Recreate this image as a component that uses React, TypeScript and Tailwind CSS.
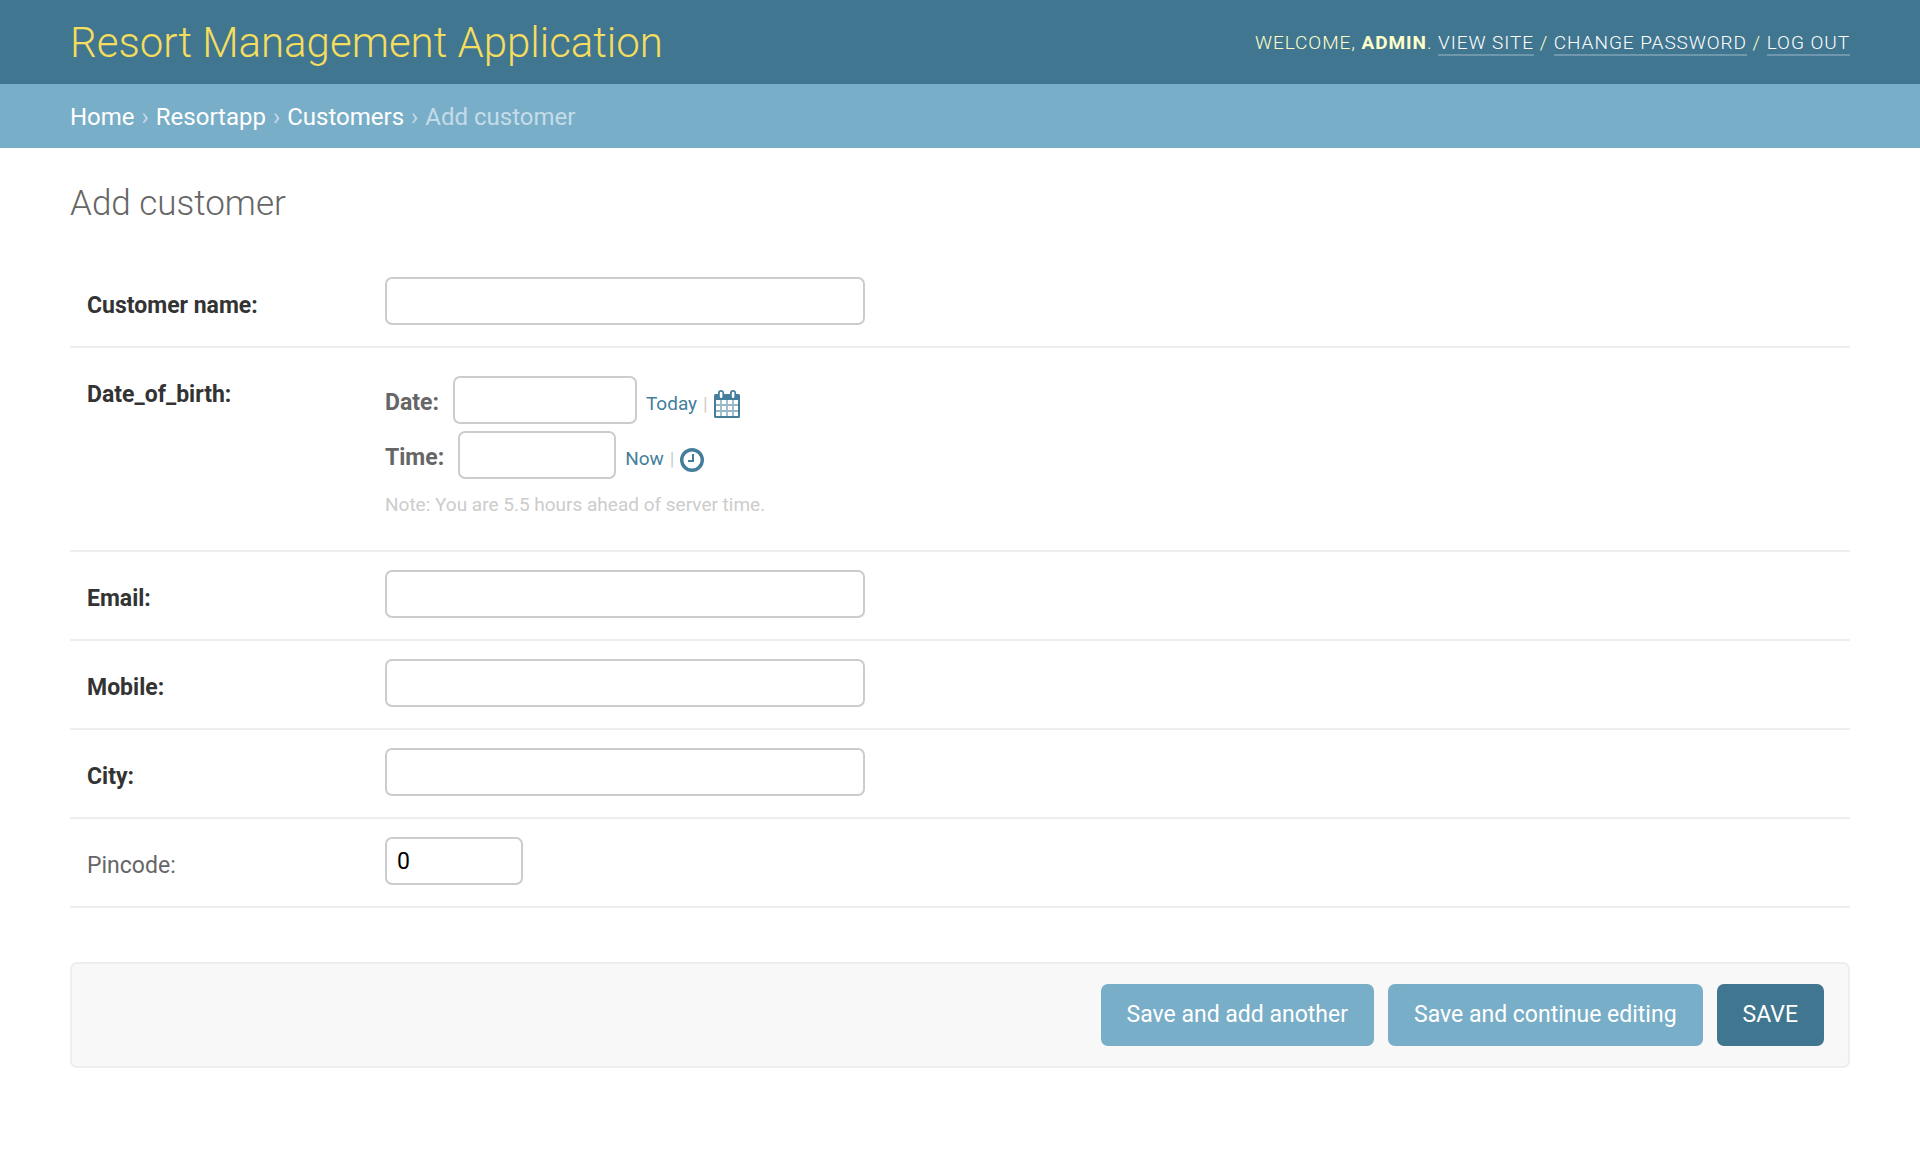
import type { ReactNode } from "react";

const inputClass =
  "h-12 rounded-[7px] border-2 border-[#ccc] bg-white px-[10px] text-[23px] text-black outline-none focus:border-[#999]";

function CalendarIcon() {
  return (
    <svg width="26" height="28" viewBox="0 0 26 28" aria-hidden="true">
      <rect x="0" y="4" width="26" height="24" rx="1.5" fill="#447e9b" />
      <rect x="2" y="10" width="22" height="16" fill="#fff" />
      <path
        d="M7 10v16M13 10v16M19 10v16M2 15h22M2 21h22"
        stroke="#447e9b"
        strokeOpacity="0.55"
        strokeWidth="1.8"
        fill="none"
      />
      <rect x="4" y="0" width="6" height="9" rx="3" fill="#447e9b" />
      <rect x="16" y="0" width="6" height="9" rx="3" fill="#447e9b" />
      <rect x="5.8" y="1.8" width="2.6" height="6.2" rx="1.3" fill="#fff" />
      <rect x="17.8" y="1.8" width="2.6" height="6.2" rx="1.3" fill="#fff" />
    </svg>
  );
}

function ClockIcon() {
  return (
    <svg width="24" height="26" viewBox="0 0 24 26" fill="none" stroke="#447e9b" aria-hidden="true">
      <circle cx="12" cy="14" r="10.3" strokeWidth="3.4" />
      <path d="M13 8v7H8" strokeWidth="2" />
    </svg>
  );
}

function Row({ id, label, required = true, children }: {
  id: string;
  label: string;
  required?: boolean;
  children: ReactNode;
}) {
  return (
    <div className="flex items-start border-b-2 border-[#eee] px-[17px] pt-[18px] pb-[21px]">
      <label
        htmlFor={id}
        className={
          required
            ? "w-[298px] shrink-0 pt-[13px] text-[23px] leading-8 font-bold text-[#333]"
            : "w-[298px] shrink-0 pt-[13px] text-[23px] leading-8 text-[#666]"
        }
      >
        {label}
      </label>
      {children}
    </div>
  );
}

function Shortcut({ text, label, children }: { text: string; label: string; children: ReactNode }) {
  return (
    <span className="ml-[9px] flex items-center pt-[7px] text-[19px] leading-7">
      <a href="#" className="text-[#447e9b]">{text}</a>
      <span className="mx-[6px] text-[#ccc]">|</span>
      <a href="#" aria-label={label}>{children}</a>
    </span>
  );
}

function Separator() {
  return <span className="mx-[7px]">›</span>;
}

const toolLink = "border-b-2 border-white/25 text-white";

export default function App() {
  return (
    <div className="min-h-screen bg-white font-['Roboto',sans-serif] text-[23px] text-[#333]">
      <header className="flex h-[84px] items-center justify-between bg-[#417690] px-[70px] pt-[2px] text-[#ffc]">
        <h1 className="text-[42px] leading-[50px] font-light">
          <a href="#" className="text-[#f5dd5d]">Resort Management Application</a>
        </h1>
        <div className="text-[19px] leading-6 font-light tracking-wider uppercase">
          Welcome, <strong className="font-bold">admin</strong>.{" "}
          <a href="#" className={toolLink}>View site</a> /{" "}
          <a href="#" className={toolLink}>Change password</a> /{" "}
          <a href="#" className={toolLink}>Log out</a>
        </div>
      </header>

      <nav
        aria-label="Breadcrumbs"
        className="flex h-16 items-center bg-[#79aec8] px-[70px] pt-[2px] text-2xl text-[#c4dce8]"
      >
        <a href="#" className="text-white">Home</a>
        <Separator />
        <a href="#" className="text-white">Resortapp</a>
        <Separator />
        <a href="#" className="text-white">Customers</a>
        <Separator />
        <span>Add customer</span>
      </nav>

      <main className="px-[70px] pt-9">
        <h2 className="text-[35px] leading-10 font-light text-[#666]">Add customer</h2>
        <form className="pt-[35px]" onSubmit={(e) => e.preventDefault()}>
          <Row id="customer_name" label="Customer name:">
            <input id="customer_name" type="text" className={`${inputClass} w-[480px]`} />
          </Row>

          <div
            role="group"
            aria-labelledby="dob"
            className="flex items-start border-b-2 border-[#eee] px-[17px] pt-7 pb-[31px]"
          >
            <span id="dob" className="w-[298px] shrink-0 pt-[3px] text-[23px] leading-8 font-bold">
              Date_of_birth:
            </span>
            <div className="text-[#666]">
              <div className="flex items-center">
                <label htmlFor="dob_date" className="mr-[14px] pt-[6px] text-[23px] leading-8 font-bold">Date:</label>
                <input id="dob_date" type="text" className={`${inputClass} w-[184px]`} />
                <Shortcut text="Today" label="Choose a date"><CalendarIcon /></Shortcut>
              </div>
              <div className="mt-[7px] flex items-center">
                <label htmlFor="dob_time" className="mr-[14px] pt-[6px] text-[23px] leading-8 font-bold">Time:</label>
                <input id="dob_time" type="text" className={`${inputClass} w-[158px]`} />
                <Shortcut text="Now" label="Choose a time"><ClockIcon /></Shortcut>
              </div>
              <p className="mt-3 text-[19px] leading-7 text-[#ccc]">
                Note: You are 5.5 hours ahead of server time.
              </p>
            </div>
          </div>

          <Row id="email" label="Email:">
            <input id="email" type="email" className={`${inputClass} w-[480px]`} />
          </Row>
          <Row id="mobile" label="Mobile:">
            <input id="mobile" type="text" className={`${inputClass} w-[480px]`} />
          </Row>
          <Row id="city" label="City:">
            <input id="city" type="text" className={`${inputClass} w-[480px]`} />
          </Row>
          <Row id="pincode" label="Pincode:" required={false}>
            <input id="pincode" type="text" inputMode="numeric" defaultValue="0" className={`${inputClass} w-[138px]`} />
          </Row>

          <div className="mt-[54px] flex justify-end gap-[14px] rounded-[7px] border-2 border-[#eee] bg-[#f8f8f8] px-6 py-5 text-[23px] text-white">
            <button type="submit" className="h-[62px] rounded-[7px] bg-[#79aec8] px-[26px]">Save and add another</button>
            <button type="submit" className="h-[62px] rounded-[7px] bg-[#79aec8] px-[26px]">Save and continue editing</button>
            <button type="submit" className="h-[62px] rounded-[7px] bg-[#417690] px-[26px] uppercase">Save</button>
          </div>
        </form>
      </main>
    </div>
  );
}
